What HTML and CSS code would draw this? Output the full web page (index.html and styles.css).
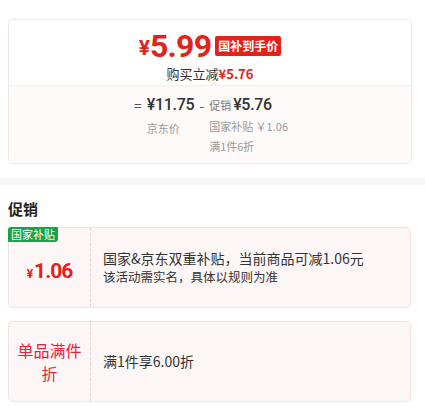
FILE: index.html
```html
<!DOCTYPE html>
<html lang="zh-CN">
<head>
  <meta charset="UTF-8" />
  <meta name="viewport" content="width=device-width, initial-scale=1.0"/>
  <title>促销</title>
  <link rel="stylesheet" href="styles.css">
</head>
<body>
  <div class="price-card">
    <div class="price-top">
      <div class="final-price">
        <span class="yen">¥</span><span class="amount">5.99</span>
        <span class="price-badge">国补到手价</span>
      </div>
      <p class="reduce">购买立减<span class="reduce-num">¥5.76</span></p>
    </div>

    <div class="price-bottom">
      <div class="formula">
        <span class="op">=</span>
        <div class="term">
          <span class="term-main">¥11.75</span>
          <span class="term-note">京东价</span>
        </div>
        <span class="op">-</span>
        <div class="term">
          <span class="term-main"><small>促销</small>¥5.76</span>
          <span class="term-note">国家补贴 ￥1.06</span>
          <span class="term-note">满1件6折</span>
        </div>
      </div>
    </div>
  </div>

  <div class="divider-band"></div>

  <section class="promo">
    <h3 class="promo-title">促销</h3>

    <div class="promo-card">
      <span class="promo-tag">国家补贴</span>
      <div class="promo-left">
        <span class="promo-value"><small>¥</small>1.06</span>
      </div>
      <div class="promo-right">
        <p class="promo-desc">国家&amp;京东双重补贴，当前商品可减1.06元</p>
        <p class="promo-sub">该活动需实名，具体以规则为准</p>
      </div>
    </div>

    <div class="promo-card">
      <div class="promo-left">
        <span class="promo-name">单品满件折</span>
      </div>
      <div class="promo-right">
        <p class="promo-desc">满1件享6.00折</p>
      </div>
    </div>
  </section>
</body>
</html>
```

FILE: styles.css
```css
* {
  box-sizing: border-box;
  margin: 0;
  padding: 0;
}

body {
  background: #fff;
  font-family: "Noto Sans CJK SC", "Noto Sans", sans-serif;
  color: #333;
}

.price-card {
  margin: 19px 0 0 8px;
  width: 404px;
  border: 1px solid #f0e6e6;
  border-radius: 5px;
  overflow: hidden;
}

.price-top {
  height: 66px;
  padding-top: 8px;
  text-align: center;
  border-bottom: 1px solid #fbeaea;
  position: relative;
}

.price-top::after {
  content: "";
  position: absolute;
  left: 200px;
  bottom: -1px;
  border: 5px solid transparent;
  border-bottom-color: #fbeaea;
}

.final-price {
  display: flex;
  justify-content: center;
  align-items: center;
  color: #e2231a;
  height: 36px;
}

.yen {
  font-family: "Roboto", sans-serif;
  font-size: 21px;
  font-weight: 700;
  margin-top: 4px;
}

.amount {
  font-family: "Roboto", sans-serif;
  font-size: 32px;
  font-weight: 700;
  letter-spacing: -0.8px;
}

.price-badge {
  margin-left: 4px;
  background: #e2231a;
  color: #fff;
  font-size: 12px;
  font-weight: 700;
  line-height: 20px;
  padding: 0 3px;
  border-radius: 2px;
}

.reduce {
  font-size: 13px;
  line-height: 18px;
  color: #333;
  margin-top: 1px;
}

.reduce-num {
  color: #e2231a;
  font-weight: 700;
}

.price-bottom {
  background: #fffafa;
  height: 77px;
  padding-top: 8px;
}

.formula {
  display: flex;
  justify-content: center;
  align-items: flex-start;
  gap: 5px;
  margin-left: 2px;
}

.op {
  font-size: 14px;
  line-height: 22px;
  color: #555;
}

.term {
  display: flex;
  flex-direction: column;
}

.term-main {
  font-family: "Roboto", sans-serif;
  font-size: 16px;
  font-weight: 500;
  line-height: 22px;
  color: #333;
  letter-spacing: -0.3px;
}

.term-main small {
  font-family: "Noto Sans CJK SC", sans-serif;
  font-size: 11px;
  font-weight: 400;
  color: #777;
  margin-right: 2px;
  letter-spacing: 0;
}

.term-note {
  font-size: 11px;
  line-height: 20px;
  color: #999;
}

.term:first-of-type .term-note {
  margin-top: 2px;
}

.divider-band {
  height: 7px;
  margin-top: 14px;
  background: #f6f7fb;
}

.promo {
  padding: 0 14px 0 8px;
}

.promo-title {
  font-size: 15px;
  font-weight: 700;
  color: #222;
  line-height: 20px;
  margin-top: 14px;
  margin-bottom: 8px;
}

.promo-card {
  position: relative;
  display: flex;
  background: #fdf6f6;
  border: 1px solid #f3e1e1;
  border-radius: 5px;
  margin-bottom: 13px;
  min-height: 81px;
}

.promo-tag {
  position: absolute;
  left: -1px;
  top: -1px;
  background: #17a34a;
  color: #fff;
  font-size: 11px;
  line-height: 15px;
  padding: 0 3px;
  border-radius: 3px 0 3px 0;
}

.promo-left {
  width: 82px;
  flex-shrink: 0;
  display: flex;
  align-items: center;
  justify-content: center;
  border-right: 1px dashed #e6d4d4;
  text-align: center;
  padding: 0 8px;
}

.promo-value {
  font-family: "Roboto", sans-serif;
  font-size: 21px;
  font-weight: 700;
  color: #e2231a;
  letter-spacing: -1px;
  margin-top: 6px;
}

.promo-value small {
  font-size: 12px;
  margin-right: 2px;
}

.promo-name {
  font-size: 16px;
  line-height: 23px;
  color: #e2233a;
}

.promo-right {
  display: flex;
  flex-direction: column;
  justify-content: center;
  padding-left: 12px;
}

.promo-desc {
  font-size: 14px;
  line-height: 19px;
  color: #333;
}

.promo-sub {
  font-size: 12.5px;
  line-height: 18px;
  color: #333;
}
```
